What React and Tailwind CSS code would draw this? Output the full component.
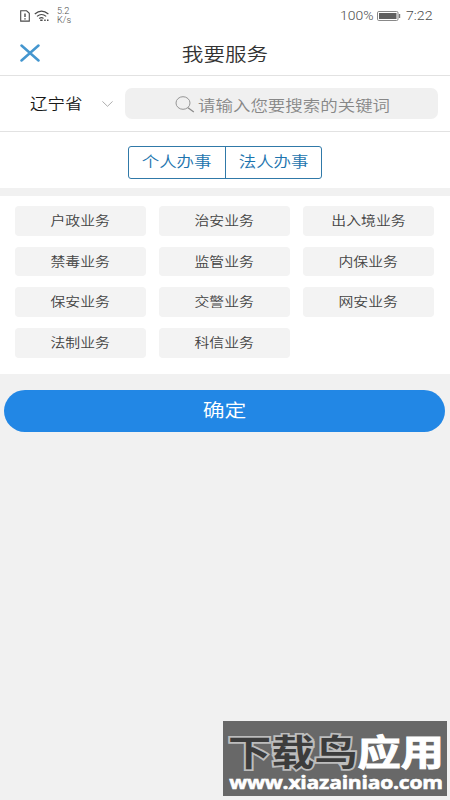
import React from "react";

const services = [
  "户政业务", "治安业务", "出入境业务",
  "禁毒业务", "监管业务", "内保业务",
  "保安业务", "交警业务", "网安业务",
  "法制业务", "科信业务",
];

function StatusBar() {
  return (
    <div className="flex h-[31px] items-center pl-[20px] pr-[17px] text-[#4c4c4c]">
      <svg className="h-[12px] w-[10px]" viewBox="0 0 10 12" fill="none" stroke="#4a4a4a" strokeWidth="1.1">
        <path d="M.7.8H6.6L9.3 3.3V11.1H.7Z" />
        <path d="M5 3.5V7M5 8.2V9.5" strokeWidth="1.4" />
      </svg>
      <svg className="ml-[4px] h-[12px] w-[16px]" viewBox="0 0 16 12" fill="none" stroke="#4a4a4a" strokeWidth="1.2">
        <path d="M.8 4Q7.5-1.8 14.4 4M3 6.4Q7.5 2.6 12.2 6.4M5.2 8.6Q7.5 6.9 9.5 8.4" />
        <path d="M6.2 10.3H8.6M10.2 10.3H11.7M13 10.3H14.5" strokeWidth="1.6" />
      </svg>
      <div className="ml-[7px] origin-left scale-x-108 pt-px text-[8.5px] font-light leading-[9.5px]">
        <div>5.2</div>
        <div>K/s</div>
      </div>
      <div className="ml-auto flex items-center font-light">
        <span className="w-[34px] whitespace-nowrap text-[12px]"><span className="inline-block origin-left scale-x-116">100%</span></span>
        <svg className="ml-[3px] h-[10px] w-[24px]" viewBox="0 0 24 10">
          <rect x=".5" y=".5" width="20.5" height="9" rx="1.3" fill="#fff" stroke="#888" />
          <rect x="2" y="2" width="17.5" height="6" fill="#606060" />
          <path d="M22.5 3V7" stroke="#777" strokeWidth="1.4" />
        </svg>
        <span className="ml-[5px] w-[27px] whitespace-nowrap pt-px text-[12.5px]"><span className="inline-block origin-left scale-x-113">7:22</span></span>
      </div>
    </div>
  );
}

function Header() {
  return (
    <header className="grid h-[45px] grid-cols-[60px_1fr_60px] items-center border-b border-[#e2e2e2]">
      <svg className="ml-[20px] h-[18px] w-[20px]" viewBox="0 0 20 18" stroke="#4496cf" strokeWidth="2.5" strokeLinecap="round">
        <path d="M1.5 1.5L18.5 16.5M18.5 1.5L1.5 16.5" />
      </svg>
      <h1 className="scale-x-120 pt-[3px] text-center text-[18px] font-[350] leading-6 text-[#333]">我要服务</h1>
    </header>
  );
}

function Search() {
  return (
    <div className="flex h-[56px] items-center border-b border-[#e2e2e2]">
      <span className="ml-[30px] w-[54px] whitespace-nowrap pt-px text-[14.8px] font-[350] text-[#181818]">
        <span className="inline-block origin-left scale-x-118">辽宁省</span>
      </span>
      <svg className="ml-[18px] h-[6px] w-[11px]" viewBox="0 0 11 6" fill="none" stroke="#999" strokeWidth=".8">
        <path d="M.4.4L5.5 5.3L10.6.4" />
      </svg>
      <div className="ml-[12px] flex h-[31px] w-[313px] items-center rounded-[7px] bg-[#f0f0f0] text-[#878787]">
        <svg className="ml-[50px] mt-[2px] h-[17px] w-[20px]" viewBox="0 0 20 17" fill="none" stroke="#8b8b8b">
          <ellipse cx="8" cy="7" rx="7" ry="6.3" strokeWidth=".9" />
          <path d="M13 11.7L18.8 16" strokeWidth="1.3" />
        </svg>
        <span className="ml-[3px] origin-left scale-x-118 whitespace-nowrap pt-[5px] text-[14.8px] font-[350]">请输入您要搜索的关键词</span>
      </div>
    </div>
  );
}

function Tabs() {
  return (
    <div className="flex h-[56px] justify-center pt-[14px]">
      <div className="grid h-[33px] w-[194px] grid-cols-2 rounded-[3px] border border-[#3079a8] text-[14.8px] font-[350] text-[#1c74ae]">
        <button className="flex items-center justify-center"><span className="scale-x-118 whitespace-nowrap">个人办事</span></button>
        <button className="flex items-center justify-center border-l border-[#3079a8]"><span className="scale-x-118 whitespace-nowrap">法人办事</span></button>
      </div>
    </div>
  );
}

function Watermark() {
  return (
    <div className="absolute left-[223px] top-[721px] flex h-[75px] w-[224px] flex-col bg-[#686868] pl-[5px] pt-[7px] whitespace-nowrap">
      <div className="flex h-[44px] origin-left scale-x-120 items-center font-['Noto_Sans_CJK_SC',sans-serif] text-[36px] font-bold leading-[44px]">
        <span className="text-[#3c3c3c] [-webkit-text-stroke:3.4px_#bdbdbd] [paint-order:stroke_fill]">下载鸟</span>
        <span className="text-white [-webkit-text-stroke:1px_#fff]">应用</span>
      </div>
      <div className="w-[170px] origin-left scale-x-114 pl-px font-['Open_Sans','Noto_Sans',sans-serif] text-[18.5px] font-bold leading-[20px] tracking-[-0.2px] text-white [-webkit-text-stroke:.6px_#fff]">
        www.xiazainiao.com
      </div>
    </div>
  );
}

export default function App() {
  return (
    <main className="relative h-[800px] w-[450px] overflow-hidden bg-[#f1f1f1] font-['Roboto','Noto_Sans_CJK_SC',sans-serif]">
      <div className="bg-white">
        <StatusBar />
        <Header />
        <Search />
        <Tabs />
      </div>
      <section className="mt-[8px] grid h-[178px] grid-cols-[repeat(3,131.5px)] content-start gap-x-[12.5px] gap-y-[11px] bg-white pl-[14.5px] pt-[10px]">
        {services.map((name) => (
          <button key={name} className="flex h-[29.7px] items-center justify-center rounded-[4px] bg-[#f3f3f3] pt-px text-[12.6px] font-[350] text-[#444]">
            <span className="scale-x-118 whitespace-nowrap">{name}</span>
          </button>
        ))}
      </section>
      <button className="ml-[4.4px] mt-[16px] flex h-[42px] w-[441px] items-center justify-center rounded-full bg-[#2287e5] pt-px text-[18.5px] font-[350] text-white">
        <span className="scale-x-118">确定</span>
      </button>
      <Watermark />
    </main>
  );
}
